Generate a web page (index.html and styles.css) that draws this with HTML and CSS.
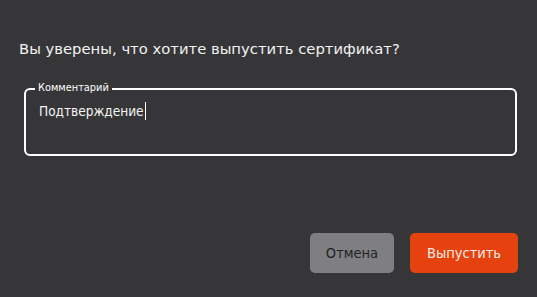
FILE: index.html
```html
<!DOCTYPE html>
<html lang="ru">
<head>
<meta charset="utf-8">
<link rel="stylesheet" href="styles.css">
</head>
<body>
<div class="dialog">
  <h1 class="title">Вы уверены, что хотите выпустить сертификат?</h1>
  <div class="field">
    <span class="label">Комментарий</span>
    <div class="value">Подтверждение<span class="caret"></span></div>
  </div>
  <div class="actions">
    <button class="btn btn-cancel">Отмена</button>
    <button class="btn btn-primary">Выпустить</button>
  </div>
</div>
</body>
</html>
```
FILE: styles.css
```css
html, body {
  margin: 0;
  padding: 0;
  background: #363638;
  width: 537px;
  height: 297px;
  overflow: hidden;
}
.dialog {
  font-family: "DejaVu Sans", sans-serif;
  color: #ffffff;
  padding: 38px 19px 0 19px;
  display: flex;
  flex-direction: column;
}
.title {
  margin: 0;
  font-size: 14.8px;
  font-weight: normal;
  line-height: 22px;
  color: #f2f2f2;
}
.field {
  position: relative;
  margin: 28px 0 0 5px;
  width: 493px;
  height: 68px;
  box-sizing: border-box;
  border: 2px solid #ffffff;
  border-radius: 6px;
  padding: 11px 13px 0 13px;
}
.label {
  position: absolute;
  top: -8px;
  left: 9px;
  padding: 0 3px;
  background: #363638;
  font-size: 9.8px;
  line-height: 12px;
  color: #ffffff;
}
.value {
  font-family: "DejaVu Sans Condensed", "DejaVu Sans", sans-serif;
  font-size: 13.5px;
  line-height: 20px;
  color: #f5f5f5;
  display: flex;
  align-items: center;
}
.caret {
  display: inline-block;
  width: 1px;
  height: 18px;
  margin-left: 1px;
  background: #ffffff;
}
.actions {
  display: flex;
  justify-content: flex-end;
  gap: 16px;
  margin-top: 77px;
}
.btn {
  height: 40px;
  border: none;
  border-radius: 5px;
  font-family: "DejaVu Sans Condensed", "DejaVu Sans", sans-serif;
  font-size: 14.5px;
  padding: 0;
}
.btn-cancel {
  width: 84px;
  background: #7f7f82;
  color: #222224;
}
.btn-primary {
  width: 108px;
  background: #e5420f;
  color: #f7ece6;
}
```
